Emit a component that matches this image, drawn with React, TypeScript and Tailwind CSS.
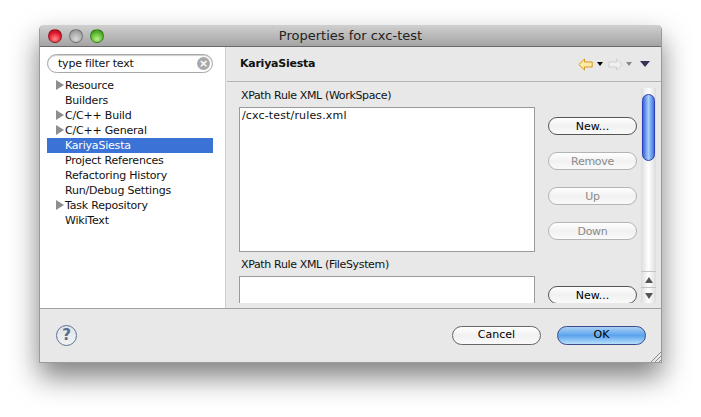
import { Fragment } from "react";

const tree = [
  { label: "Resource", arrow: true },
  { label: "Builders" },
  { label: "C/C++ Build", arrow: true },
  { label: "C/C++ General", arrow: true },
  { label: "KariyaSiesta", selected: true },
  { label: "Project References" },
  { label: "Refactoring History" },
  { label: "Run/Debug Settings" },
  { label: "Task Repository", arrow: true },
  { label: "WikiText" },
];

const TreeRow = ({ label, arrow, selected }: { label: string; arrow?: boolean; selected?: boolean }) => (
  <div className={`flex h-[15px] items-center pl-[18px] pt-px tracking-[-0.2px] ${selected ? "bg-[#3b72d5] text-white" : "text-[#111]"}`}>
    {arrow && <span className="mb-[2px] ml-[-9px] mr-px h-0 w-0 border-y-[5px] border-l-[8px] border-y-transparent border-l-[#8e8e8e]" />}
    <span>{label}</span>
  </div>
);

const AquaButton = ({ label, disabled }: { label: string; disabled?: boolean }) => (
  <button
    className={`h-[18px] w-[89px] shrink-0 rounded-full border bg-gradient-to-b from-white via-[#f1f1f1] to-[#fafafa] text-[11px] leading-[15px] ${
      disabled ? "border-[#b4b4b4] tracking-[-0.3px] text-[#8a8a8a]" : "border-[#555] text-black"
    }`}
  >
    {label}
  </button>
);

const Light = ({ color }: { color: string }) => (
  <span className={`h-[14px] w-[14px] rounded-full border border-black/30 ${color}`} />
);

const NavArrow = ({ fill, stroke, flip }: { fill: string; stroke: string; flip?: boolean }) => (
  <svg width="15" height="13" viewBox="0 0 15 13" className={flip ? "-scale-x-100" : ""}>
    <path d="M.8 6.5 6.5 1v3h7.7v5H6.5v3z" fill={fill} stroke={stroke} strokeWidth="1" />
  </svg>
);

const Caret = ({ className }: { className: string }) => (
  <span className={`h-0 w-0 border-x-[3px] border-t-[4px] border-x-transparent ${className}`} />
);

export default function App() {
  return (
    <div className="h-[417px] w-[701px] overflow-hidden bg-white pl-[39px] pt-[25px] font-['DejaVu_Sans',sans-serif] text-[11px]">
      <div className="relative flex h-[338px] w-[623px] flex-col rounded-t-[5px] border-x border-b border-[#9a9a9a] bg-[#e8e8e8] shadow-[0_14px_28px_rgba(0,0,0,0.5)]">
        {/* Title bar */}
        <div className="relative flex h-[22px] shrink-0 items-center justify-center rounded-t-[5px] border-b border-[#6a6a6a] bg-gradient-to-b from-[#d0d0d0] to-[#a4a4a4] text-[13px] text-[#222]">
          <div className="absolute left-2 top-1 flex gap-[7px]">
            <Light color="bg-[radial-gradient(circle_at_50%_75%,#ff8a8a,#e0162b_60%,#a80c1c)]" />
            <Light color="bg-[radial-gradient(circle_at_50%_75%,#d8d8d8,#aaa_60%,#888)]" />
            <Light color="bg-[radial-gradient(circle_at_50%_75%,#b6f08a,#55b52c_60%,#2f8a16)]" />
          </div>
          Properties for cxc-test
        </div>

        <div className="flex h-[262px] shrink-0 border-b border-[#a0a0a0]">
          {/* Sidebar */}
          <div className="flex w-[186px] shrink-0 flex-col border-r border-[#cfcfcf] bg-white pl-[7px] pr-3 pt-[7px]">
            <div className="flex h-[19px] items-center justify-between rounded-full border border-[#a8a8a8] pl-[10px] pr-[2px] tracking-[-0.2px] text-[#111] shadow-[inset_0_1px_1px_rgba(0,0,0,0.2)]">
              <span className="pt-px">type filter text</span>
              <span className="flex h-[13px] w-[13px] items-center justify-center rounded-full bg-[#a9a9a9] text-[11px] font-bold leading-none text-white">×</span>
            </div>
            <div className="mt-[5px]">
              {tree.map((item) => (
                <Fragment key={item.label}>
                  <TreeRow {...item} />
                </Fragment>
              ))}
            </div>
          </div>

          {/* Main panel */}
          <div className="ml-px flex min-w-0 flex-1 flex-col">
            <div className="flex h-[35px] shrink-0 items-center justify-between border-b border-[#b4b4b4] pl-[13px] pr-[11px]">
              <span className="pt-px font-bold tracking-[-0.25px] text-[#111]">KariyaSiesta</span>
              <div className="flex items-center">
                <NavArrow fill="#fde9a8" stroke="#d99a1c" />
                <Caret className="ml-[4px] border-t-black" />
                <span className="ml-[5px] flex"><NavArrow fill="#efefef" stroke="#d0d0d0" flip /></span>
                <Caret className="ml-[3px] border-t-[#888]" />
                <span className="ml-[8px] h-0 w-0 border-x-[5px] border-t-[6px] border-x-transparent border-t-[#333355]" />
              </div>
            </div>
            <div className="mb-[5px] flex min-h-0 flex-1 overflow-hidden pl-[12px]">
              <div className="w-[296px] shrink-0 pt-[6px]">
                <div className="h-[19px] pl-[2px] leading-[15px] tracking-[-0.35px] text-[#111]">XPath Rule XML (WorkSpace)</div>
                <div className="h-[145px] border border-[#9a9a9a] bg-white px-[2px] tracking-[0.15px] text-[#111]">/cxc-test/rules.xml</div>
                <div className="mt-[5px] h-[19px] pl-[2px] leading-[15px] tracking-[-0.35px] text-[#111]">XPath Rule XML (FileSystem)</div>
                <div className="h-[40px] border border-[#9a9a9a] bg-white" />
              </div>
              <div className="ml-[13px] flex flex-col gap-[17px] pt-[35px]">
                <AquaButton label="New..." />
                <AquaButton label="Remove" disabled />
                <AquaButton label="Up" disabled />
                <AquaButton label="Down" disabled />
                <div className="mt-[29px]"><AquaButton label="New..." /></div>
              </div>
              {/* Scrollbar */}
              <div className="ml-[4px] mt-[6px] flex w-[15px] shrink-0 flex-col bg-gradient-to-r from-[#dcdcdc] via-white to-[#dcdcdc]">
                <div className="mx-px mt-[6px] h-[67px] rounded-full border border-[#2c3fb8] bg-gradient-to-r from-[#3f63d8] via-[#a6d0fb] to-[#3f70dc]" />
                <div className="flex-1" />
                <div className="flex h-[16px] items-center justify-center border-t border-[#c4c4c4]">
                  <span className="h-0 w-0 border-x-[4px] border-b-[6px] border-x-transparent border-b-[#555]" />
                </div>
                <div className="flex h-[16px] items-center justify-center border-t border-[#c4c4c4]">
                  <span className="h-0 w-0 border-x-[4px] border-t-[6px] border-x-transparent border-t-[#555]" />
                </div>
              </div>
            </div>
          </div>
        </div>

        {/* Footer */}
        <div className="flex flex-1 items-center pl-4 pr-[15px]">
          <div className="flex h-[21px] w-[21px] items-center justify-center rounded-full border border-[#5a7296] bg-gradient-to-b from-[#dfe3e9] to-[#f2f2f2] text-[15px] font-bold text-[#566c90]">?</div>
          <div className="ml-auto flex gap-[16px]">
            <button className="h-[19px] w-[89px] rounded-full border border-[#666] bg-gradient-to-b from-white via-[#f1f1f1] to-[#fafafa] text-[11px] text-black">Cancel</button>
            <button className="h-[19px] w-[89px] rounded-full border border-[#3a4a8a] bg-gradient-to-b from-[#a9d0f5] via-[#5ba3ec] to-[#b6e0fb] text-[11px] text-black">OK</button>
          </div>
        </div>

        <svg width="11" height="11" viewBox="0 0 11 11" className="absolute bottom-0 right-0">
          <path d="M1 11 11 1M5 11l6-6M9 11l2-2" stroke="#8a8a8a" strokeWidth="1" />
        </svg>
      </div>
    </div>
  );
}
